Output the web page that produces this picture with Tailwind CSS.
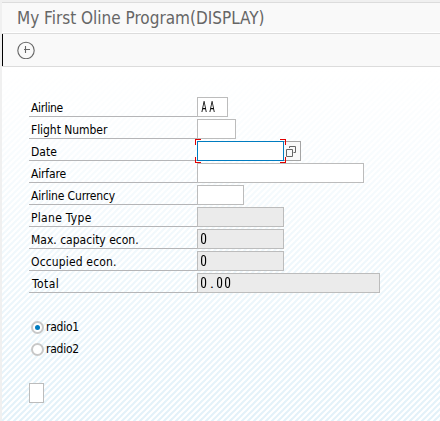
<!DOCTYPE html>
<html lang="en"><head><meta charset="utf-8"><title>My First Oline Program</title>
<script src="https://cdn.jsdelivr.net/npm/@tailwindcss/browser@4"></script></head>
<body class="w-[440px] h-[421px] overflow-hidden bg-[#f0f0f0] pl-[2px] pt-[2px] flex flex-col text-black text-[12px] font-['DejaVu_Sans_Condensed','DejaVu_Sans',sans-serif] [font-stretch:condensed]">
<header class="h-[31px] shrink-0 border-t border-[#dcdcdc] bg-[#f9f9f9] pl-[15px] pt-px flex items-center text-[17px] text-[#666] whitespace-nowrap shadow-[inset_0_-1px_#fff]"><h1>My First Oline Program(DISPLAY)</h1></header>
<nav class="h-[34px] shrink-0 border-y border-[#dcdcdc] bg-[#f9f9f9] flex">
<div class="w-px bg-black"></div>
<button class="ml-[14px] mt-[7px] size-[18px]" aria-label="Continue"><svg width="18" height="18" viewBox="0 0 18 18" fill="none" stroke="#666" stroke-width="1.1"><circle cx="9" cy="9.5" r="8.2"/><path d="M8.500 5v7M7 8.500h6" /></svg></button>
</nav>
<main class="relative flex-1 bg-white pl-[27px] pt-[30px]">
<svg class="absolute inset-0 size-full"><defs><pattern id="p" width="6" height="6" patternUnits="userSpaceOnUse"><path d="M-1 1L1 -1M-1 7L7 -1M5 7L7 5" stroke="#e2f1f9" stroke-width="2"/></pattern><linearGradient id="g" x2="0" y2="1"><stop stop-color="#fff" stop-opacity="0"/><stop offset="1" stop-color="#fff"/></linearGradient><mask id="m"><rect width="438" height="354" fill="url(#g)"/></mask></defs><rect width="438" height="354" fill="url(#p)" mask="url(#m)"/></svg>
<form class="relative">
<div class="flex flex-col gap-[2px] whitespace-nowrap">
<div class="flex h-5"><label class="w-[168px] border-b border-[#b5b5b7] pl-[2px] pt-[3px] leading-4 tracking-[-0.35px]">Airline</label><div class="w-[31px] border border-[#bcbcbc] bg-white pl-[2px] flex items-center font-[Roboto] text-[14px]"><span class="w-2 flex justify-center"><span class="scale-x-[.7]">A</span></span><span class="w-2 flex justify-center"><span class="scale-x-[.7]">A</span></span></div></div>
<div class="flex h-5"><label class="w-[168px] border-b border-[#b5b5b7] pl-[2px] pt-[3px] leading-4 tracking-[-0.05px]">Flight Number</label><div class="w-[39px] border border-[#bcbcbc] bg-white"></div></div>
<div class="flex h-5"><label class="w-[168px] border-b border-[#b5b5b7] pl-[2px] pt-[3px] leading-4">Date</label>
<div class="relative w-[87px] border border-[#007cc0] bg-white"><svg class="absolute -left-[3px] -top-[3px]" width="91" height="24" fill="none" stroke="#e00000" shape-rendering="crispEdges"><path d="M.5 6V.5H6M85 .5h5.500V6M.5 18v5.500H6M85 23.500h5.500V18"/></svg></div>
<button type="button" class="w-[17px] border border-l-0 border-[#a5a5a5] bg-[#f9f9f9]" aria-label="Choose date"><svg class="block" width="16" height="18" fill="none" stroke="#666"><path d="M2.500 7.500h6v7h-6zM5.500 6v-1.500h6v6h-2"/></svg></button></div>
<div class="flex h-5"><label class="w-[168px] border-b border-[#b5b5b7] pl-[2px] pt-[3px] leading-4 tracking-[-0.15px]">Airfare</label><div class="w-[167px] border border-[#bcbcbc] bg-white"></div></div>
<div class="flex h-5"><label class="w-[168px] border-b border-[#b5b5b7] pl-[2px] pt-[3px] leading-4 tracking-[-0.14px]">Airline Currency</label><div class="w-[47px] border border-[#bcbcbc] bg-white"></div></div>
<div class="flex h-5"><label class="w-[168px] border-b border-[#b5b5b7] pl-[2px] pt-[3px] leading-4 tracking-[0.3px]">Plane Type</label><div class="w-[87px] border border-[#bcbcbc] bg-[#ebebeb]"></div></div>
<div class="flex h-5"><label class="w-[168px] border-b border-[#b5b5b7] pl-[2px] pt-[3px] leading-4">Max. capacity econ.</label><div class="w-[87px] border border-[#bcbcbc] bg-[#ebebeb] pl-[2px] flex items-center font-[Roboto] text-[15px]"><span class="w-2 flex justify-center"><span class="scale-x-90">0</span></span></div></div>
<div class="flex h-5"><label class="w-[168px] border-b border-[#b5b5b7] pl-[2px] pt-[3px] leading-4 tracking-[0.15px]">Occupied econ.</label><div class="w-[87px] border border-[#bcbcbc] bg-[#ebebeb] pl-[2px] flex items-center font-[Roboto] text-[15px]"><span class="w-2 flex justify-center"><span class="scale-x-90">0</span></span></div></div>
<div class="flex h-5"><label class="w-[168px] border-b border-[#b5b5b7] pl-[3px] pt-[3px] leading-4 tracking-[0.45px]">Total</label><div class="w-[183px] border border-[#bcbcbc] bg-[#ebebeb] pl-[2px] flex items-center font-[Roboto] text-[15px]"><span class="w-2 flex justify-center"><span class="scale-x-90">0</span></span><span class="w-2 flex justify-center">.</span><span class="w-2 flex justify-center"><span class="scale-x-90">0</span></span><span class="w-2 flex justify-center"><span class="scale-x-90">0</span></span></div></div>
</div>
<div class="mt-6 ml-[2px] flex flex-col gap-[2px] tracking-[-0.25px]">
<label class="flex h-5 items-center gap-[2px]"><span class="size-[13px] rounded-full border-2 border-[#c8c8c8] bg-white flex items-center justify-center"><span class="size-[5px] rounded-full bg-[#007cc0]"></span></span>radio1</label>
<label class="flex h-5 items-center gap-[2px]"><span class="size-[13px] rounded-full border-2 border-[#c8c8c8] bg-white"></span>radio2</label>
</div>
<div class="mt-6 h-5 w-[15px] border border-[#bcbcbc] bg-white"></div>
</form>
</main></body></html>
